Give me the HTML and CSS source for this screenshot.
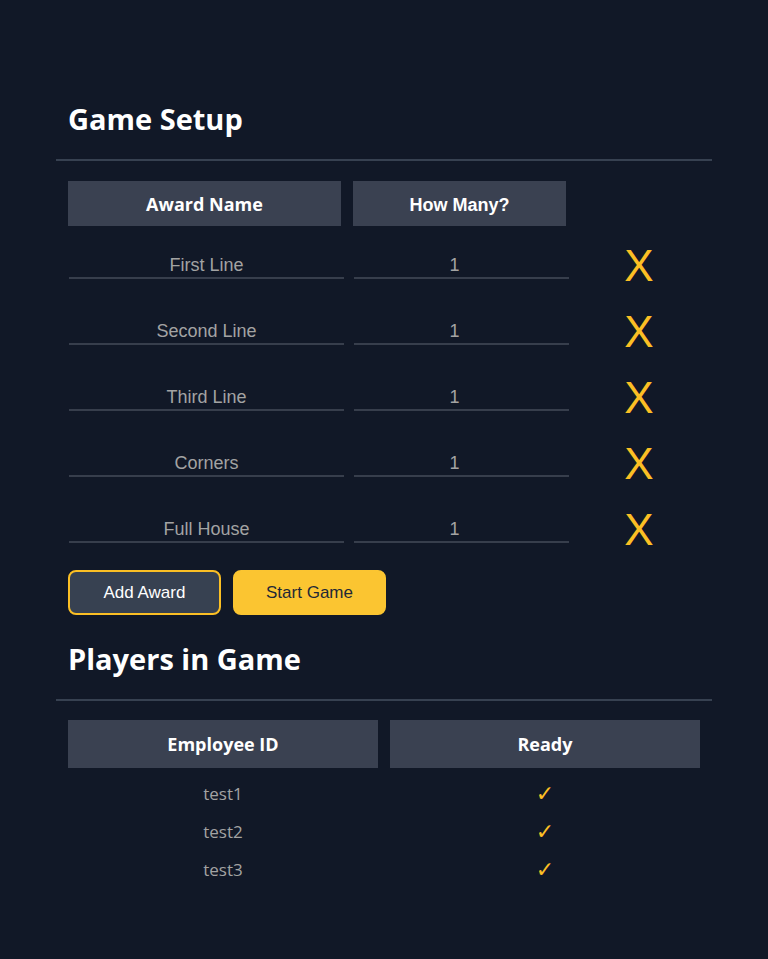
FILE: index.html
```html
<!DOCTYPE html>
<html lang="en">
<head>
<meta charset="utf-8">
<title>Game Setup</title>
<link rel="stylesheet" href="styles.css">
</head>
<body>
<main class="container">
  <h2 class="title">Game Setup</h2>
  <div class="divider"></div>
  <table class="awards">
    <colgroup>
      <col class="c-name"><col class="c-count"><col class="c-remove">
    </colgroup>
    <thead>
      <tr><th>Award Name</th><th class="arial">How Many?</th><th class="blank"></th></tr>
    </thead>
    <tbody>
      <tr><td><input class="field" value="First Line"></td><td><input class="field num" value="1"></td><td class="rm"><button class="remove">X</button></td></tr>
      <tr><td><input class="field" value="Second Line"></td><td><input class="field num" value="1"></td><td class="rm"><button class="remove">X</button></td></tr>
      <tr><td><input class="field" value="Third Line"></td><td><input class="field num" value="1"></td><td class="rm"><button class="remove">X</button></td></tr>
      <tr><td><input class="field" value="Corners"></td><td><input class="field num" value="1"></td><td class="rm"><button class="remove">X</button></td></tr>
      <tr><td><input class="field" value="Full House"></td><td><input class="field num" value="1"></td><td class="rm"><button class="remove">X</button></td></tr>
    </tbody>
  </table>
  <div class="actions">
    <button class="btn btn-outline">Add Award</button>
    <button class="btn btn-solid">Start Game</button>
  </div>

  <h2 class="title title-players">Players in Game</h2>
  <div class="divider"></div>
  <table class="players">
    <thead>
      <tr><th>Employee ID</th><th>Ready</th></tr>
    </thead>
    <tbody>
      <tr><td>test1</td><td class="check">✓</td></tr>
      <tr><td>test2</td><td class="check">✓</td></tr>
      <tr><td>test3</td><td class="check">✓</td></tr>
    </tbody>
  </table>
</main>
</body>
</html>
```
FILE: styles.css
```css
html, body {
  margin: 0;
  background: #111827;
}
body {
  font-family: "Open Sans", "Noto Sans", sans-serif;
  color: #ffffff;
}
.container {
  width: 656px;
  margin: 0 auto;
  padding-top: 101px;
}
.title {
  margin: 0 0 0 12px;
  font-size: 29px;
  line-height: 36px;
  font-weight: 700;
  color: #ffffff;
}
.title-players {
  margin-top: 26px;
}
.divider {
  height: 2px;
  background: #374151;
  margin-top: 22px;
}
table {
  width: 100%;
  border-collapse: separate;
  border-spacing: 12px;
}
.awards {
  margin-top: 8px;
}
.c-name { width: 273px; }
.c-count { width: 213px; }
th {
  background: #3a4151;
  color: #ffffff;
  font-size: 18px;
  font-weight: 700;
  text-align: center;
  padding: 0;
  height: 45px;
}
th.arial {
  font-family: "Liberation Sans", Arial, sans-serif;
  height: 42px;
  padding-top: 3px;
}
th.blank {
  background: transparent;
}
.awards td {
  height: 54px;
  padding: 0;
  vertical-align: middle;
  text-align: center;
}
.field {
  display: block;
  box-sizing: border-box;
  width: calc(100% + 2px);
  height: 28px;
  margin: 0 0 0 1px;
  padding: 2px 0 0;
  background: transparent;
  border: none;
  border-bottom: 2px solid #373e4c;
  color: #a3a3a3;
  font-family: "Liberation Sans", Arial, sans-serif;
  font-size: 18px;
  text-align: center;
  outline: none;
}
.field.num {
  padding-right: 14px;
}
.remove {
  background: none;
  border: none;
  padding: 2px 0 0;
  color: #fbbf24;
  font-family: "Liberation Sans", Arial, sans-serif;
  font-size: 44px;
  line-height: 1;
  cursor: pointer;
}
.actions {
  display: flex;
  gap: 12px;
  margin: 2px 0 0 12px;
}
.btn {
  box-sizing: border-box;
  width: 153px;
  height: 45px;
  border-radius: 8px;
  font-family: "Liberation Sans", Arial, sans-serif;
  font-size: 17px;
  cursor: pointer;
}
.btn-outline {
  background: #374151;
  border: 2px solid #fbbf24;
  color: #ffffff;
}
.btn-solid {
  background: #fbc531;
  border: 2px solid #fbc531;
  color: #1f2937;
}
.players {
  margin-top: 7px;
}
.players th {
  width: 50%;
  height: 48px;
}
.players td {
  height: 25px;
  padding: 1px 0 0;
  text-align: center;
  vertical-align: middle;
  color: #a3a3a3;
  font-size: 17px;
  line-height: 25px;
}
.players td.check {
  color: #fbbf24;
  font-family: "DejaVu Sans", sans-serif;
  font-size: 22px;
  font-weight: 700;
  line-height: 25px;
}
```
